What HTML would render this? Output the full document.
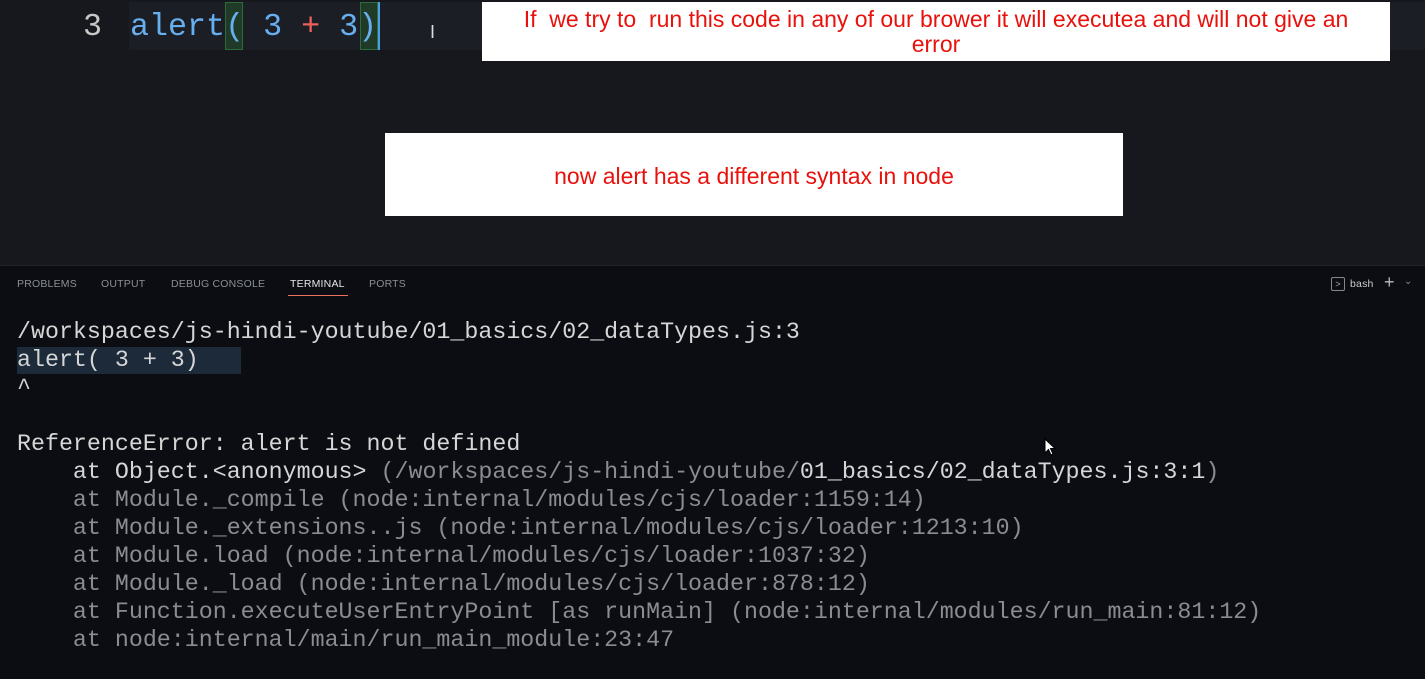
<!DOCTYPE html>
<html><head><style>
body{margin:0;width:1425px;height:679px;overflow:hidden;background:#0b0d12;position:relative;font-family:"Liberation Sans",sans-serif}
.ed{position:absolute;left:0;top:0;width:1425px;height:265px;background:#16181d}
.mono{font-family:"Liberation Mono",monospace}
.code{position:absolute;top:6px;left:0;font-size:31.7px;line-height:42px;white-space:pre}
.hl{position:absolute;left:129px;top:2px;width:1296px;height:48px;background:#1b1e24}
.box{position:absolute;background:#fff;color:#e8110c;text-align:center;font-size:23px;line-height:25px}
.tabs{position:absolute;top:278px;font-size:10.5px;color:#8b8f96;letter-spacing:.2px}
.term{position:absolute;left:17px;top:318px;font-size:23.3px;line-height:28px;color:#d6d6d6;white-space:pre}
.dim{color:#8a8c90}
</style></head><body>
<div class="ed"></div>
<div class="hl"></div>
<div style="position:absolute;left:225px;top:2px;width:18px;height:48px;background:#1f3a26;border:1px solid #2e6b3a;box-sizing:border-box"></div>
<div style="position:absolute;left:360px;top:2px;width:18px;height:48px;background:#1f3a26;border:1px solid #2e6b3a;box-sizing:border-box"></div>
<div style="position:absolute;left:378px;top:2px;width:2px;height:48px;background:#4a9eea"></div>
<div class="code mono"><span style="position:absolute;left:83px;color:#c8c8c8">3</span><span style="position:absolute;left:130px;color:#68aff0">alert( 3 <span style="color:#f0605a">+</span> 3)</span></div>
<div style="position:absolute;left:430px;top:22px;color:#ddd;font-size:18px">I</div>
<div class="box" style="left:482px;top:2px;width:908px;height:59px;padding-top:5px;box-sizing:border-box">If &nbsp;we try to &nbsp;run this code in any of our brower it will executea and will not give an<br>error</div>
<div class="box" style="left:385px;top:133px;width:738px;height:83px;line-height:86px">now alert has a different syntax in node</div>
<div style="position:absolute;left:0;top:265px;width:1425px;height:1px;background:#22252b"></div>
<div class="tabs" style="left:17px">PROBLEMS</div>
<div class="tabs" style="left:101px">OUTPUT</div>
<div class="tabs" style="left:171px">DEBUG CONSOLE</div>
<div class="tabs" style="left:290px;color:#e6e6e6">TERMINAL</div>
<div style="position:absolute;left:288px;top:295px;width:60px;height:1px;background:#f07060"></div>
<div class="tabs" style="left:369px">PORTS</div>
<div style="position:absolute;left:1331px;top:277px;width:12px;height:12px;border:1px solid #888;border-radius:2px;color:#aaa;font-size:9px;line-height:12px;text-align:center">&gt;</div>
<div class="tabs" style="left:1350px;color:#ccc">bash</div>
<div style="position:absolute;left:1384px;top:272px;color:#bbb;font-size:18px">+</div>
<div style="position:absolute;left:1404px;top:276px;color:#888;font-size:10px">&#8964;</div>
<div style="position:absolute;left:17px;top:347px;width:224px;height:27px;background:#1c2a3a"></div>
<div class="term mono">/workspaces/js-hindi-youtube/01_basics/02_dataTypes.js:3
alert( 3 + 3)
^

ReferenceError: alert is not defined
    at Object.&lt;anonymous&gt; <span class="dim">(/workspaces/js-hindi-youtube/</span>01_basics/02_dataTypes.js:3:1<span class="dim">)</span>
<span class="dim">    at Module._compile (node:internal/modules/cjs/loader:1159:14)
    at Module._extensions..js (node:internal/modules/cjs/loader:1213:10)
    at Module.load (node:internal/modules/cjs/loader:1037:32)
    at Module._load (node:internal/modules/cjs/loader:878:12)
    at Function.executeUserEntryPoint [as runMain] (node:internal/modules/run_main:81:12)
    at node:internal/main/run_main_module:23:47</span></div>
<svg style="position:absolute;left:1044px;top:438px" width="12" height="18"><path d="M1 1V15L4.5 11.5L7 17L9 16L6.5 10.5H11Z" fill="#fff" stroke="#000"/></svg>
</body></html>
